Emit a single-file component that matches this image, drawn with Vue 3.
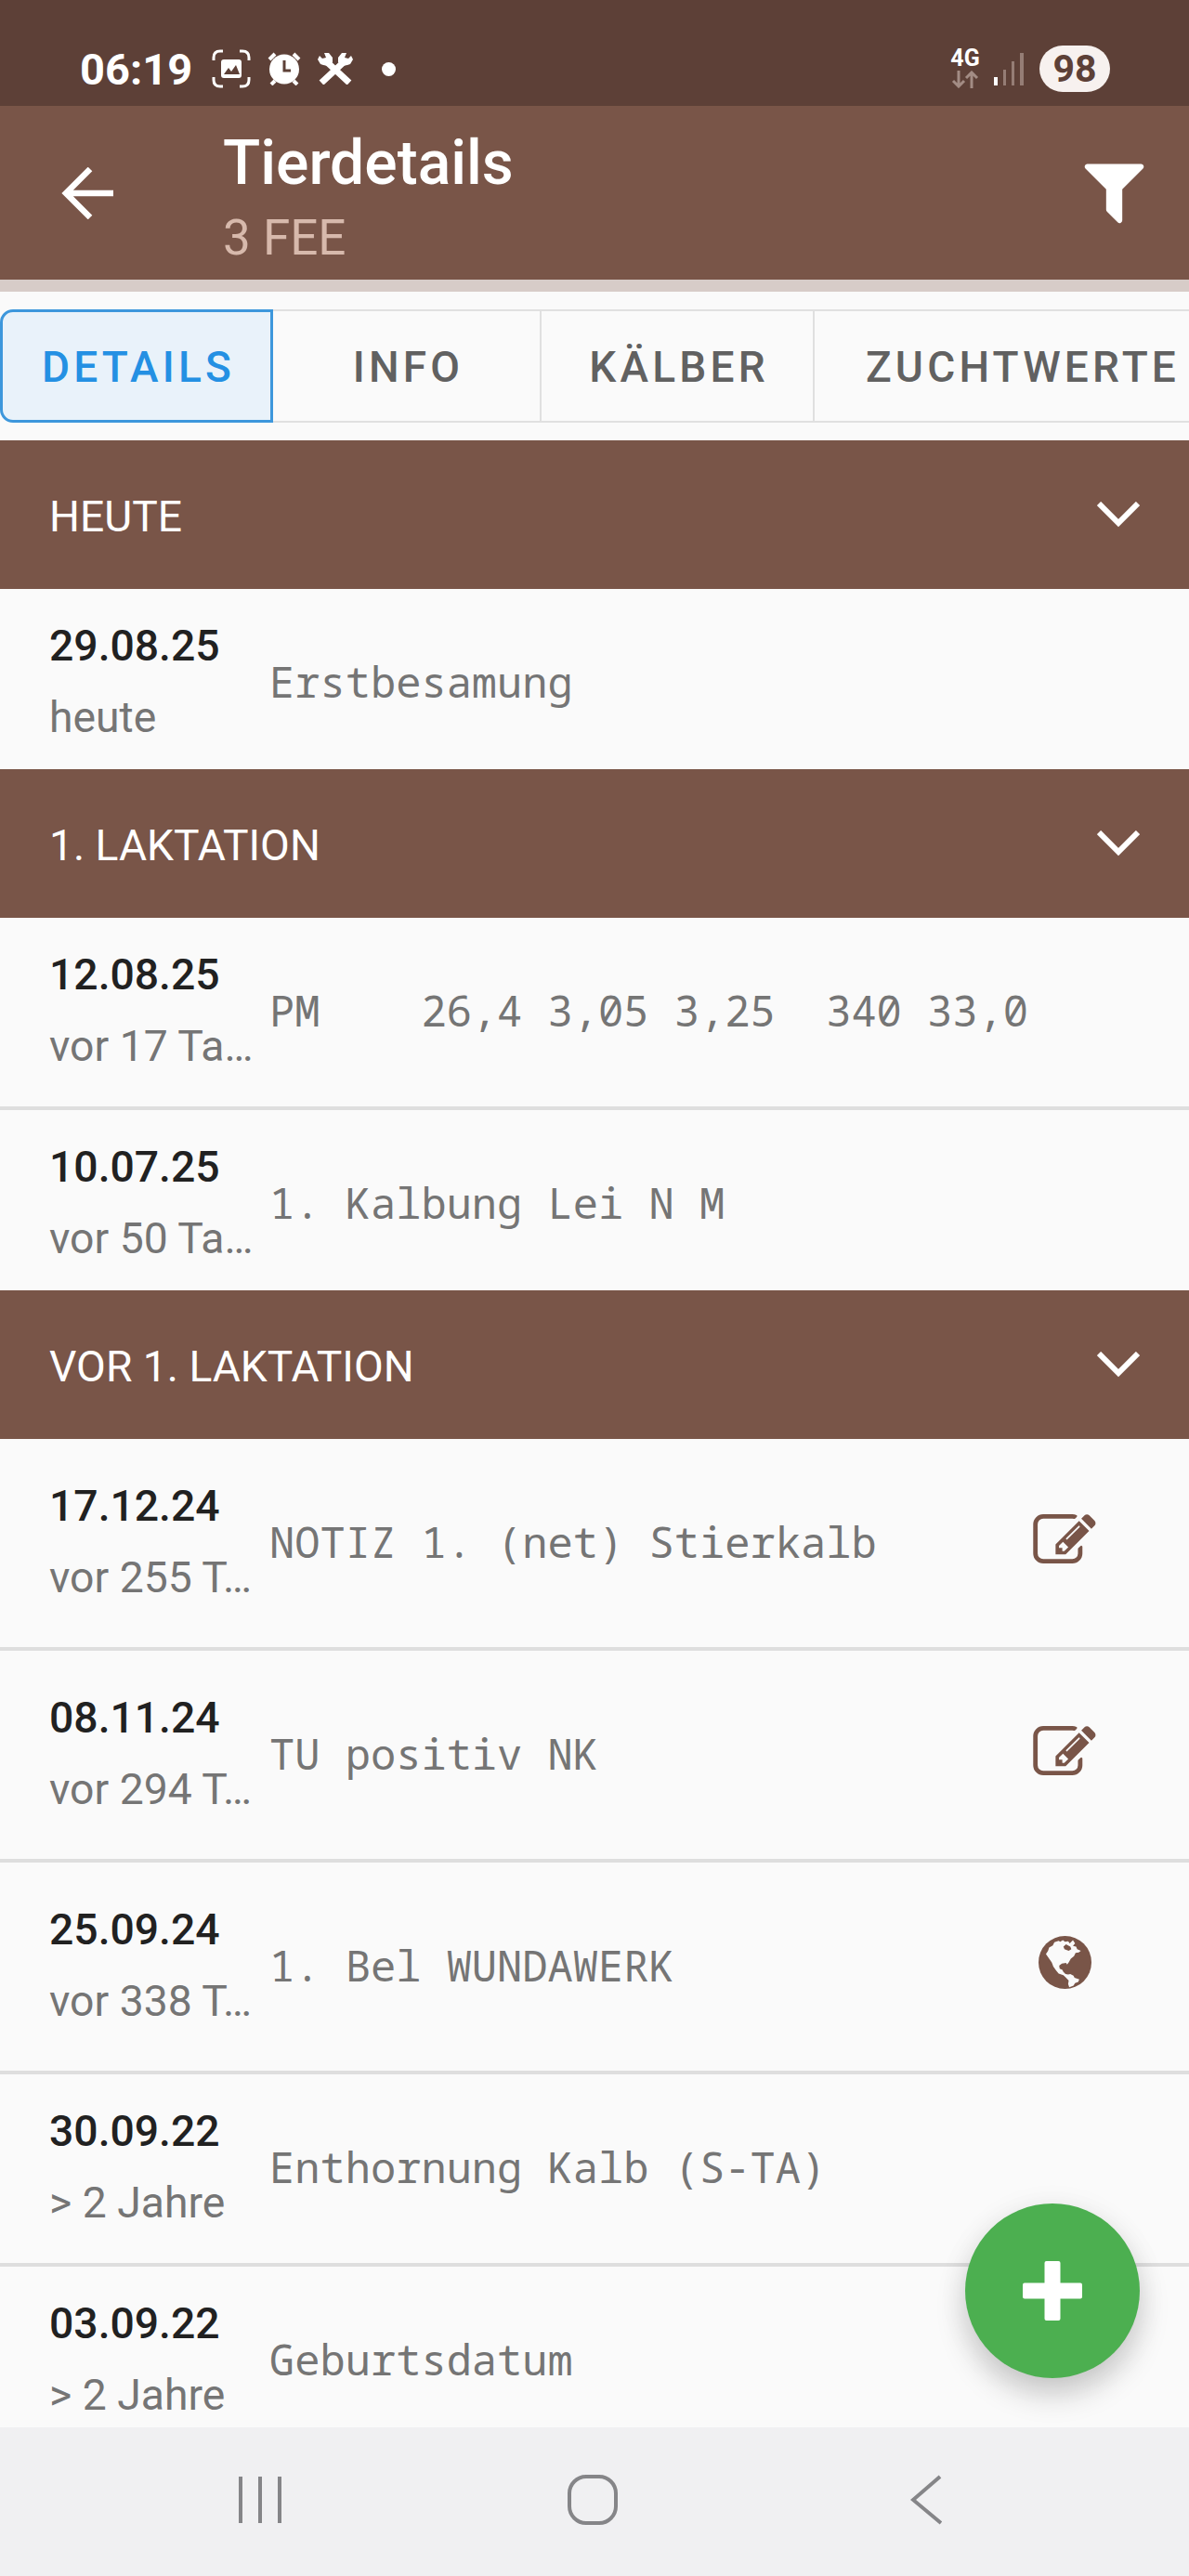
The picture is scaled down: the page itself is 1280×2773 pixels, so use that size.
<template>
  <div class="screen">
    <div class="status-bar">
      <span class="clock">06:19</span>
      <svg class="capture" viewBox="0 0 42 42">
        <path d="M2 12V9q0-7 7-7h3M30 2h3q7 0 7 7v3M40 30v3q0 7-7 7h-3M12 40H9q-7 0-7-7v-3" fill="none" stroke="#fff" stroke-width="3" />
        <rect x="10" y="11" width="22" height="20" rx="3" fill="#fff" />
        <path d="M13 27l5-7 3 4 5-7 4 10z" fill="#5d4037" />
      </svg>
      <svg class="alarm" viewBox="0 0 36 36">
        <circle cx="18" cy="18.500" r="16" fill="#fff" />
        <path d="M2 8l6-6M34 8l-6-6M8 31l-4 4M28 31l4 4" stroke="#fff" stroke-width="4" />
        <path d="M18 9v11h7" fill="none" stroke="#5d4037" stroke-width="3" />
      </svg>
      <svg class="tools" viewBox="0 0 38 34">
        <path d="M8 8l26 24M30 8L4 32" stroke="#fff" stroke-width="7" />
        <path d="M0 7l2-4 3 3 4-1-2-5h5l4 5v5l-5 4-5-1-3-1zM38 7l-2-4-3 3-4-1 2-5h-5l-4 5v5l5 4 5-1 3-1z" fill="#fff" />
      </svg>
      <span class="dot"></span>
      <span class="spacer"></span>
      <div class="network">
        <span>4G</span>
        <svg width="30" height="19" viewBox="0 0 30 19" fill="none" stroke="#a38c84" stroke-width="3">
          <path d="M8 0v17M2 11l6 6 6-6M22 19V2M16 8l6-6 6 6" />
        </svg>
      </div>
      <svg class="signal" viewBox="0 0 34 36">
        <path d="M0 27h4v9H0z" fill="#fff" />
        <path d="M10 19h3v17h-3zM19 10h3v26h-3zM28 1h4v35h-4z" fill="#957d75" />
      </svg>
      <span class="battery">98</span>
    </div>

    <header class="toolbar">
      <svg class="back" viewBox="0 0 56 56" fill="none" stroke="#fff" stroke-width="6.500">
        <path d="M31 2L5 28l26 26M5 28h51" />
      </svg>
      <div class="titles">
        <h1>Tierdetails</h1>
        <p>3 FEE</p>
      </div>
      <svg class="filter" viewBox="0 0 1792 1792">
        <path d="M1595 295q17 41-14 70l-493 493v742q0 42-39 59-13 5-25 5-27 0-45-19l-256-256q-19-19-19-45v-486l-493-493q-31-29-14-70 17-39 59-39h1280q42 0 59 39z" fill="#fff" />
      </svg>
    </header>

    <nav class="tabs">
      <button
        v-for="tab in tabs"
        :key="tab"
        :class="['tab', { active: tab === selectedTab }]"
        @click="selectedTab = tab"
      >{{ tab }}</button>
    </nav>

    <main class="list">
      <section v-for="group in groups" :key="group.title">
        <div class="group-head" @click="group.open = !group.open">
          <h2>{{ group.title }}</h2>
          <svg class="chevron" viewBox="0 0 46 28" fill="none" stroke="#fff" stroke-width="6">
            <path d="M2 2l21 21L44 2" />
          </svg>
        </div>
        <template v-if="group.open">
          <div v-for="item in group.items" :key="item.date" :class="['row', { tall: item.icon }]">
            <div class="when">
              <strong>{{ item.date }}</strong>
              <span>{{ item.ago }}</span>
            </div>
            <div class="text">{{ item.text }}</div>
            <svg v-if="item.icon === 'edit'" class="icon edit" viewBox="0 128 1792 1408">
              <path d="M888 1184l116-116-152-152-116 116v56h96v96h56zm440-720q-16-16-33 1l-350 350q-17 17-1 33t33-1l350-350q17-17 1-33zm80 594v190q0 119-84.500 203.500t-203.500 84.500h-832q-119 0-203.500-84.500t-84.500-203.500v-832q0-119 84.500-203.500t203.500-84.500h832q63 0 117 25 15 7 18 23 3 17-9 29l-49 49q-14 14-32 8-23-6-45-6h-832q-66 0-113 47t-47 113v832q0 66 47 113t113 47h832q66 0 113-47t47-113v-126q0-13 9-22l64-64q15-15 35-7t20 29zm-96-738l288 288-672 672h-288v-288zm444 132l-92 92-288-288 92-92q28-28 68-28t68 28l152 152q28 28 28 68t-28 68z" />
            </svg>
            <svg v-if="item.icon === 'globe'" class="icon globe" viewBox="0 0 100 100">
              <circle cx="50" cy="50" r="50" />
              <path class="land" d="M14 34l4-6 2-6 7-4 3-6 8-3 3 2 5-3 4 3 6-1 3 4 6-6 4 6-4 5 6 1 2 5 7 3-4 3-6 1-3 6-6 5-4 7-3 4-2-3-8 1-5 4 1 6 5 2 2 4 4 4 5 1 4-1 6 3 2 4 9 3-2 5-6 2-3 5-8 3-2-6 1-7-5-5-5-5-9-3-5-6-5-7-3-8z" />
              <path d="M47 20l5-4 8 4 2 5-5 3-8-3z" />
            </svg>
          </div>
        </template>
      </section>
    </main>

    <button class="fab">
      <svg width="64" height="64" viewBox="0 0 64 64" fill="#fff">
        <rect x="23.500" y="0" width="17" height="64" rx="2" />
        <rect x="0" y="23.500" width="64" height="17" rx="2" />
      </svg>
    </button>

    <footer class="system-nav">
      <svg class="recents" viewBox="0 0 48 50" stroke="#858588" stroke-width="4">
        <path d="M3 0v50M24 0v50M45 0v50" />
      </svg>
      <span class="home"></span>
      <svg class="nav-back" viewBox="0 0 34 54" fill="none" stroke="#858588" stroke-width="4">
        <path d="M32 2L3 27l30 25" />
      </svg>
    </footer>
  </div>
</template>

<script setup>
import { ref } from 'vue';

const tabs = ['DETAILS', 'INFO', 'KÄLBER', 'ZUCHTWERTE'];
const selectedTab = ref('DETAILS');

const groups = ref([
  {
    title: 'HEUTE',
    open: true,
    items: [{ date: '29.08.25', ago: 'heute', text: 'Erstbesamung' }],
  },
  {
    title: '1. LAKTATION',
    open: true,
    items: [
      { date: '12.08.25', ago: 'vor 17 Ta…', text: 'PM    26,4 3,05 3,25  340 33,0' },
      { date: '10.07.25', ago: 'vor 50 Ta…', text: '1. Kalbung Lei N M' },
    ],
  },
  {
    title: 'VOR 1. LAKTATION',
    open: true,
    items: [
      { date: '17.12.24', ago: 'vor 255 T…', text: 'NOTIZ 1. (net) Stierkalb', icon: 'edit' },
      { date: '08.11.24', ago: 'vor 294 T…', text: 'TU positiv NK', icon: 'edit' },
      { date: '25.09.24', ago: 'vor 338 T…', text: '1. Bel WUNDAWERK', icon: 'globe' },
      { date: '30.09.22', ago: '> 2 Jahre', text: 'Enthornung Kalb (S-TA)' },
      { date: '03.09.22', ago: '> 2 Jahre', text: 'Geburtsdatum' },
    ],
  },
]);
</script>

<style>
body {
  margin: 0;
  background: #fafafa;
}
</style>

<style scoped>
.screen {
  position: relative;
  display: flex;
  flex-direction: column;
  width: 1280px;
  height: 2773px;
  overflow: hidden;
  background: #fafafa;
  font-family: Roboto, sans-serif;
}

h1,
h2,
p {
  margin: 0;
  font-weight: 400;
}

button {
  margin: 0;
  padding: 0;
  border: none;
  font-family: inherit;
}

svg {
  display: block;
  flex: none;
}

.status-bar {
  display: flex;
  align-items: center;
  flex: none;
  height: 80px;
  padding: 34px 85px 0 86px;
  background: #5d4037;
  color: #fff;
}

.clock {
  width: 142px;
  font-size: 47px;
  font-weight: 700;
}

.capture {
  width: 42px;
  height: 42px;
  margin-right: 18px;
}

.alarm {
  width: 36px;
  height: 36px;
  margin-right: 18px;
}

.tools {
  width: 38px;
  height: 34px;
  margin-right: 31px;
}

.dot {
  width: 15px;
  height: 15px;
  border-radius: 50%;
  background: #fff;
}

.spacer {
  flex: 1;
}

.network {
  display: flex;
  flex-direction: column;
  align-items: center;
  gap: 3px;
  width: 32px;
  margin-right: 15px;
  font-size: 25px;
  font-weight: 700;
  line-height: 20px;
}

.signal {
  width: 34px;
  height: 36px;
  margin-right: 15px;
}

.battery {
  width: 76px;
  height: 50px;
  border-radius: 25px;
  background: #f7f1ef;
  color: #5d4037;
  font-size: 41px;
  font-weight: 700;
  line-height: 51px;
  text-align: center;
}

.toolbar {
  display: flex;
  align-items: center;
  flex: none;
  height: 187px;
  padding: 0 40px 0 66px;
  border-bottom: 13px solid #d7ccc8;
  background: #795548;
  color: #fff;
}

.back {
  width: 56px;
  height: 56px;
  margin-right: 118px;
}

.titles {
  flex: 1;
}

.titles h1 {
  padding-top: 16px;
  font-size: 66px;
  font-weight: 500;
  line-height: 80px;
}

.titles p {
  color: #d7b9ac;
  font-size: 53px;
  line-height: 80px;
}

.filter {
  width: 81px;
  height: 81px;
  margin-top: -5px;
}

.tabs {
  display: flex;
  flex: none;
  height: 122px;
  padding: 19px 0;
}

.tab {
  flex: none;
  box-sizing: border-box;
  width: 294px;
  padding: 2px 0 0 4px;
  border: 2px solid #e0e0e0;
  border-left: none;
  background: #fafafa;
  color: #616161;
  font-size: 46px;
  font-weight: 500;
  letter-spacing: 4.200px;
}

.tab:nth-child(2) {
  width: 289px;
}

.tab:last-child {
  width: 460px;
  padding: 2px 10px 0 0;
}

.tab.active {
  border: 3px solid #3d97dc;
  border-radius: 14px 0 0 14px;
  background: #e9f2fa;
  color: #2490e3;
}

.list {
  flex: 1;
  min-height: 0;
  overflow: hidden;
}

.group-head {
  display: flex;
  align-items: center;
  justify-content: space-between;
  height: 160px;
  padding: 0 53px;
  background: #795548;
  color: #fff;
}

.group-head h2 {
  padding-top: 4px;
  font-size: 46.200px;
}

.chevron {
  width: 46px;
  height: 28px;
}

.row {
  display: flex;
  box-sizing: border-box;
  height: 207px;
  padding: 22px 100px 0 53px;
  border-bottom: 4px solid #dedede;
}

.row:last-child {
  height: 194px;
  border-bottom: none;
}

.row.tall {
  height: 228px;
  padding-top: 33px;
}

.when {
  display: flex;
  flex-direction: column;
  flex: none;
  width: 237px;
  padding-top: 1px;
  white-space: nowrap;
  font-size: 46.300px;
  line-height: 77px;
}

.when strong {
  color: #212121;
  font-weight: 500;
}

.when span {
  color: #757575;
}

.text {
  flex: 1;
  color: #757575;
  font-family: "Droid Sans Mono", "Noto Sans Mono", "DejaVu Sans Mono", monospace;
  font-size: 45.400px;
  line-height: 155px;
  white-space: pre;
}

.icon {
  fill: #795548;
}

.edit {
  width: 68px;
  height: 53px;
  margin-top: 48px;
}

.globe {
  width: 57px;
  height: 57px;
  margin: 46px 5px 0 0;
}

.globe .land {
  fill: #fafafa;
}

.fab {
  position: absolute;
  right: 53px;
  bottom: 213px;
  display: flex;
  align-items: center;
  justify-content: center;
  width: 188px;
  height: 188px;
  border-radius: 50%;
  background: #4caf50;
  box-shadow: 0 18px 32px rgba(0, 0, 0, 0.18), 0 4px 34px rgba(0, 0, 0, 0.06);
}

/* keeps the button shadow off the system bar */
.system-nav {
  position: relative;
  display: flex;
  align-items: center;
  justify-content: space-between;
  flex: none;
  box-sizing: border-box;
  height: 160px;
  padding: 0 266px 4px 256px;
  background: #f0f0f2;
}

.recents {
  width: 48px;
  height: 50px;
}

.home {
  box-sizing: border-box;
  width: 54px;
  height: 54px;
  margin-right: 8px;
  border: 4px solid #858588;
  border-radius: 20px;
}

.nav-back {
  width: 34px;
  height: 54px;
}
</style>
